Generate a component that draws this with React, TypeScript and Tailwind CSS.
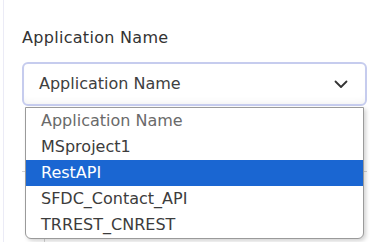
import React from 'react';

const options = ['Application Name', 'MSproject1', 'RestAPI', 'SFDC_Contact_API', 'TRREST_CNREST'];

const Chevron: React.FC = () => (
  <svg width="14" height="9" viewBox="0 0 14 9" fill="none">
    <path d="M1.5 1.5 L7 7 L12.5 1.5" stroke="#333" strokeWidth="1.8" strokeLinecap="round" strokeLinejoin="round" />
  </svg>
);

export default function App() {
  const selected = 'RestAPI';

  return (
    <div className="h-[242px] w-[372px] overflow-hidden bg-white font-['DejaVu_Sans',sans-serif]">
      <div className="ml-[3px] flex h-full border-l border-[#ebebf6]">
        <div className="relative flex-1 pl-[18px] pr-[5px] pt-[28px]">
          {/* Label */}
          <label className="block text-[16px] leading-[20px] tracking-[0.3px] text-[#333]">
            Application Name
          </label>

          {/* Select */}
          <div className="mt-[14px] flex h-[44px] items-center justify-between rounded-md border-2 border-[#c6ccee] bg-white pl-[15px] pr-[17px] shadow-[inset_0_-6px_8px_-6px_rgba(0,0,0,0.08)]">
            <span className="text-[16px] text-[#404040]">Application Name</span>
            <Chevron />
          </div>

          {/* Content behind the dropdown */}
          <div className="mt-[65px] border-t border-[#d4d4d4]" />
          <div className="ml-[22px] mt-[63px] h-[20px] border-l border-[#d4d4d4]" />

          {/* Dropdown list */}
          <div className="absolute left-[21px] top-[107px] w-[339px] overflow-hidden rounded-b-md border border-[#9a9a9a] bg-white shadow-[2px_2px_4px_rgba(0,0,0,0.18)]">
            {options.map((opt, i) => (
              <div
                key={opt}
                className={
                  opt === selected
                    ? 'flex h-[26px] items-center bg-[#1a66d2] pl-[15px] text-[16px] text-white'
                    : i === 0
                    ? 'flex h-[26px] items-center pl-[15px] text-[16px] text-[#6a6a6a]'
                    : 'flex h-[26px] items-center pl-[15px] text-[16px] text-[#3c3c3c]'
                }
              >
                {opt}
              </div>
            ))}
          </div>
        </div>
      </div>
    </div>
  );
}
